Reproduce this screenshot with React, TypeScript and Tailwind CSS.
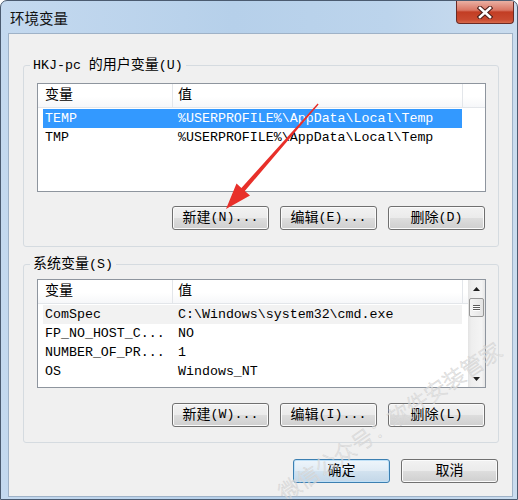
import React from "react";

const CJK = /([\u3000-\u303f\u4e00-\u9fff\uff00-\uffef]+)/;

// ASCII stays in the mono face, CJK runs get a slightly larger size like SimSun
function Txt({ s }: { s: string }) {
  return (
    <>
      {s.split(CJK).map((p, i) =>
        i % 2 === 1 ? (
          <span key={i} className="text-[14px]">
            {p}
          </span>
        ) : (
          <React.Fragment key={i}>{p}</React.Fragment>
        )
      )}
    </>
  );
}

function Btn({ label, primary }: { label: string; primary?: boolean }) {
  return (
    <button
      className={
        primary
          ? "flex h-[24px] w-[97px] items-center justify-center rounded-[3px] border border-[#3c7fb1] bg-[linear-gradient(#eef5fb_0%,#e1ecf5_48%,#d2e2ef_52%,#c3d7e8_100%)] leading-none text-black shadow-[inset_0_0_0_1px_#bfe0f7]"
          : "flex h-[24px] w-[97px] items-center justify-center rounded-[3px] border border-[#707070] bg-[linear-gradient(#f2f2f2_0%,#ebebeb_48%,#dddddd_52%,#cfcfcf_100%)] leading-none text-black shadow-[inset_0_0_0_1px_#fbfbfb]"
      }
    >
      <Txt s={label} />
    </button>
  );
}

interface Row {
  name: string;
  value: string;
  state?: "selected" | "focus";
}

function Header() {
  return (
    <div className="flex h-[24px] border-b border-[#e3e6ea] bg-[linear-gradient(#ffffff_55%,#f6f7f9)]">
      <div className="flex w-[135px] items-center border-r border-[#e3e6ea] pl-[7px]">
        <Txt s="变量" />
      </div>
      <div className="flex w-[290px] items-center border-r border-[#e3e6ea] pl-[5px]">
        <Txt s="值" />
      </div>
      <div className="flex-1" />
    </div>
  );
}

function Rows({ rows }: { rows: Row[] }) {
  return (
    <div className="pl-[5px] pt-[1px]">
      {rows.map((r) => (
        <div
          key={r.name}
          className={
            r.state === "selected"
              ? "flex h-[19px] w-[419px] items-center bg-[#3399ff] text-white"
              : r.state === "focus"
              ? "flex h-[19px] w-[419px] items-center bg-[#f2f2f2]"
              : "flex h-[19px] w-[419px] items-center"
          }
        >
          <div className="w-[129px] whitespace-nowrap pl-[2px]">{r.name}</div>
          <div className="whitespace-nowrap pl-[6px]">{r.value}</div>
        </div>
      ))}
    </div>
  );
}

function ScrollBar() {
  return (
    <div className="flex w-[17px] flex-col bg-[linear-gradient(90deg,#e3e3e3,#eeeeee_20%,#f4f4f4_80%,#e6e6e6)]">
      <div className="flex h-[17px] items-center justify-center">
        <svg width="7" height="4" viewBox="0 0 7 4">
          <path d="M0 4L3.5 0L7 4Z" fill="#1f1f1f" />
        </svg>
      </div>
      <div className="mx-[1px] mt-[1px] flex h-[19px] flex-col items-center justify-center gap-[1px] rounded-[2px] border border-[#979797] bg-[linear-gradient(90deg,#f4f4f4,#e4e4e4)]">
        <div className="h-[1px] w-[7px] bg-[#5c5c5c] shadow-[0_1px_0_#ffffff]" />
        <div className="h-[1px] w-[7px] bg-[#5c5c5c] shadow-[0_1px_0_#ffffff]" />
        <div className="h-[1px] w-[7px] bg-[#5c5c5c] shadow-[0_1px_0_#ffffff]" />
      </div>
      <div className="flex-1" />
      <div className="flex h-[17px] items-center justify-center">
        <svg width="7" height="4" viewBox="0 0 7 4">
          <path d="M0 0L3.5 4L7 0Z" fill="#1f1f1f" />
        </svg>
      </div>
    </div>
  );
}

const userRows: Row[] = [
  { name: "TEMP", value: "%USERPROFILE%\\AppData\\Local\\Temp", state: "selected" },
  { name: "TMP", value: "%USERPROFILE%\\AppData\\Local\\Temp" },
];

const sysRows: Row[] = [
  { name: "ComSpec", value: "C:\\Windows\\system32\\cmd.exe", state: "focus" },
  { name: "FP_NO_HOST_C...", value: "NO" },
  { name: "NUMBER_OF_PR...", value: "1" },
  { name: "OS", value: "Windows_NT" },
];

export default function App() {
  return (
    <div className="relative flex h-[500px] w-[518px] flex-col overflow-hidden rounded-t-[7px] border border-[#4b5b70] bg-[linear-gradient(90deg,#c4d9ef,#b6d0ea_45%,#bcd4ec_75%,#cadcee)] font-['Liberation_Mono','Noto_Sans_CJK_SC',monospace] text-[13.3px] leading-[17px] text-black">
      {/* title bar */}
      <div className="flex h-[32px] items-start justify-between">
        <div className="pl-[9px] pt-[7px] font-['Noto_Sans_CJK_SC',sans-serif] text-[14.5px] leading-[20px] text-[#111]">
          环境变量
        </div>
        <div className="mr-[3px] flex h-[23px] w-[58px] items-center justify-center rounded-b-[4px] border border-t-0 border-[#6a2a24] bg-[linear-gradient(#eab0a3_0%,#d97563_42%,#c23d24_50%,#c94a30_85%,#d86a4c_100%)]">
          <svg width="16" height="13" viewBox="0 0 16 13">
            <path d="M3 2L13 11M13 2L3 11" stroke="#4a1d18" strokeWidth="4.6" strokeLinecap="square" />
            <path d="M3 2L13 11M13 2L3 11" stroke="#ffffff" strokeWidth="2.6" strokeLinecap="square" />
          </svg>
        </div>
      </div>

      {/* client area */}
      <div className="mb-[2px] ml-[7px] mr-[4px] flex flex-1 flex-col border border-[#9fb2c7] bg-[#f0f0f0] pl-[14px] pr-[13px] pt-[23px]">
        <fieldset className="rounded-[3px] border border-[#d5dbe0] pb-[16px]">
          <legend className="ml-[6px] h-[17px] px-[3px] leading-[17px]">
            <Txt s="HKJ-pc 的用户变量(U)" />
          </legend>
          <div className="ml-[13px] mt-[9px] h-[109px] w-[449px] overflow-hidden border border-[#8e959e] bg-white">
            <Header />
            <Rows rows={userRows} />
          </div>
          <div className="mt-[14px] flex justify-end gap-[11px] pr-[13px]">
            <Btn label="新建(N)..." />
            <Btn label="编辑(E)..." />
            <Btn label="删除(D)" />
          </div>
        </fieldset>

        <fieldset className="mt-[9px] rounded-[3px] border border-[#d5dbe0] pb-[15px]">
          <legend className="ml-[6px] h-[17px] px-[3px] leading-[17px]">
            <Txt s="系统变量(S)" />
          </legend>
          <div className="ml-[13px] mt-[6px] flex h-[109px] w-[449px] overflow-hidden border border-[#8e959e] bg-white">
            <div className="flex-1 overflow-hidden">
              <Header />
              <Rows rows={sysRows} />
            </div>
            <ScrollBar />
          </div>
          <div className="mt-[15px] flex justify-end gap-[11px] pr-[13px]">
            <Btn label="新建(W)..." />
            <Btn label="编辑(I)..." />
            <Btn label="删除(L)" />
          </div>
        </fieldset>

        <div className="mt-[16px] flex justify-end gap-[11px] pr-[1px]">
          <Btn label="确定" primary />
          <Btn label="取消" />
        </div>
      </div>

      {/* red arrow annotation */}
      <svg className="pointer-events-none absolute left-0 top-0" width="518" height="500">
        <polygon
          points="225,208 235.5,182.5 240.4,187 316.6,102.6 317.6,103.6 243.8,189.9 249,194.5"
          fill="#e8302a"
        />
      </svg>

      {/* watermark */}
      <div className="pointer-events-none absolute left-[248px] top-[404px] w-[280px] -rotate-[34deg] whitespace-nowrap text-center font-['Noto_Sans_CJK_SC',sans-serif] text-[22px] font-light leading-[30px] text-[#f0f0f0]/40 [-webkit-text-stroke:0.5px_#d2d2d2]">
        微信公众号：软件安装管家
      </div>
    </div>
  );
}
